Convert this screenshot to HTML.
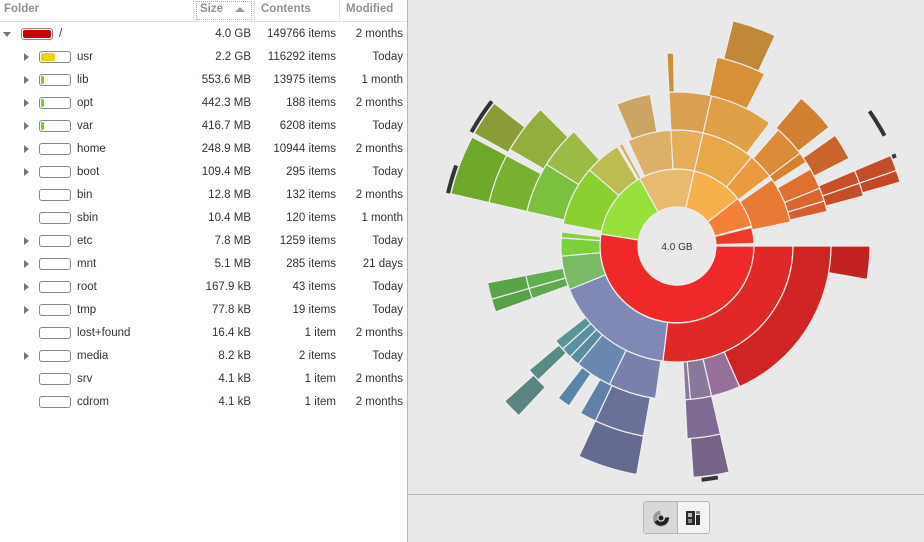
<!DOCTYPE html>
<html><head><meta charset="utf-8"><style>
body{margin:0;width:924px;height:542px;overflow:hidden;font-family:"Liberation Sans","DejaVu Sans",sans-serif;font-size:11.5px;color:#2e3436;background:#fff;position:relative}
#left{position:absolute;left:0;top:0;width:407px;height:542px;background:#fff;border-right:1px solid #b8b8b8}
#hdr{position:absolute;left:0;top:0;width:407px;height:21px;border-bottom:1px solid #e0e0e0;color:#909090;font-weight:bold;font-size:11.5px}
#hdr span{position:absolute;top:3px}
.sep{position:absolute;top:0;width:1px;height:21px;background:#e4e4e4}
.row{position:absolute;left:0;width:407px;height:23px}
.row span{position:absolute;top:5px;white-space:nowrap}
.tri{position:absolute;top:7px;left:24px;width:0;height:0;border-left:5px solid #777;border-top:4px solid transparent;border-bottom:4px solid transparent}
.bar{position:absolute;top:5px;left:39px;width:30px;height:10px;border:1px solid #888;border-radius:3px;background:#fff;overflow:hidden}
.bar i{position:absolute;left:1px;top:1px;bottom:1px;border-radius:2px}
.r{text-align:right}
#right{position:absolute;left:408px;top:0;width:516px;height:542px;background:#e9e9e9}
#bot{position:absolute;left:408px;top:494px;width:516px;height:1px;background:#b8b8b8}
</style></head><body>
<div id="left">
<div id="hdr"><span style="left:4px">Folder</span>
<div class="sep" style="left:193px"></div>
<div style="position:absolute;left:196px;top:1px;width:54px;height:17px;border:1px dotted #aaa"></div>
<span style="left:200px">Size</span>
<div style="position:absolute;left:235px;top:7px;border-left:5px solid transparent;border-right:5px solid transparent;border-bottom:5px solid #999"></div>
<div class="sep" style="left:254px"></div>
<span style="left:261px">Contents</span>
<div class="sep" style="left:339px"></div>
<span style="left:346px">Modified</span>
</div>
<div id="rows"></div>
</div>
<div id="right"></div>
<div id="bot"></div>
<svg id="sun" width="924" height="542" style="position:absolute;left:0;top:0"></svg>
<div style="position:absolute;left:643px;top:501px;width:65px;height:31px;border:1px solid #b5b5b5;border-radius:3px;background:#f4f4f4;overflow:hidden">
<div style="position:absolute;left:0;top:0;width:33px;height:31px;background:#d8d8d8;border-right:1px solid #b5b5b5"></div>
<svg width="66" height="31" style="position:absolute;left:0;top:0">
<path d="M16.5 10.5 A6 6 0 1 0 23 15.5" fill="none" stroke="#999" stroke-width="4"/>
<path d="M12 19 A6 6 0 0 0 23 15.5" fill="none" stroke="#222" stroke-width="4"/>
<circle cx="17" cy="16" r="2.5" fill="#222"/>
<rect x="42" y="9" width="9" height="14" fill="#2a2a2a"/><rect x="44" y="11" width="4" height="4" fill="#bbb"/><rect x="44" y="17" width="4" height="4" fill="#888"/>
<rect x="52" y="9" width="4" height="3" fill="#888"/><rect x="52" y="13" width="4" height="10" fill="#2a2a2a"/>
</svg></div>
<script>
var rows=[["/","4.0 GB","149766 items","2 months",1,"#cc0000",28,1],
["usr","2.2 GB","116292 items","Today",1,"#edd400",14],
["lib","553.6 MB","13975 items","1 month",1,"#73d216",3],
["opt","442.3 MB","188 items","2 months",1,"#73d216",3],
["var","416.7 MB","6208 items","Today",1,"#73d216",3],
["home","248.9 MB","10944 items","2 months",1,"",0],
["boot","109.4 MB","295 items","Today",1,"",0],
["bin","12.8 MB","132 items","2 months",0,"",0],
["sbin","10.4 MB","120 items","1 month",0,"",0],
["etc","7.8 MB","1259 items","Today",1,"",0],
["mnt","5.1 MB","285 items","21 days",1,"",0],
["root","167.9 kB","43 items","Today",1,"",0],
["tmp","77.8 kB","19 items","Today",1,"",0],
["lost+found","16.4 kB","1 item","2 months",0,"",0],
["media","8.2 kB","2 items","Today",1,"",0],
["srv","4.1 kB","1 item","2 months",0,"",0],
["cdrom","4.1 kB","1 item","2 months",0,"",0]];
var h="";rows.forEach(function(r,i){var y=23+i*23;var root=r[7];var bx=root?21:39,nx=root?59:77;
h+='<div class="row" style="top:'+y+'px">';
if(root)h+='<div style="position:absolute;left:3px;top:9px;border-top:5px solid #777;border-left:4px solid transparent;border-right:4px solid transparent"></div>';
else if(r[4])h+='<div class="tri"></div>';
h+='<div class="bar" style="left:'+bx+'px">'+(r[6]?'<i style="width:'+r[6]+'px;background:'+r[5]+'"></i>':'')+'</div>';
h+='<span style="left:'+nx+'px">'+r[0]+'</span><span class="r" style="right:156px">'+r[1]+'</span><span class="r" style="right:71px">'+r[2]+'</span><span class="r" style="right:4px">'+r[3]+'</span></div>';});
document.getElementById("rows").innerHTML=h;
var cx=677,cy=246,R=[39,77,116,154,193,232,271,300];
function pt(r,a){a=a*Math.PI/180;return (cx+r*Math.sin(a)).toFixed(1)+","+(cy-r*Math.cos(a)).toFixed(1)}
function arcR(r0,r1,a0,a1,c,sw){var l=(a1-a0)>180?1:0;return '<path d="M'+pt(r0,a0)+"L"+pt(r1,a0)+"A"+r1+","+r1+" 0 "+l+" 1 "+pt(r1,a1)+"L"+pt(r0,a1)+"A"+r0+","+r0+" 0 "+l+" 0 "+pt(r0,a0)+'Z" fill="'+c+'" stroke="#eee" stroke-width="'+(sw===undefined?1.2:sw)+'"/>'}
var S=[
[1,90,279,"#ef2929"],[1,279,331,"#98e03c"],[1,331,13,"#e8ba70"],[1,13,52,"#f6b04c"],[1,52,75,"#f48038"],[1,76,88,"#ee3a2a"],
[2,90,187,"#e02828"],[2,187,248,"#8089b5"],[2,248,265,"#7aba66"],[2,265,274,"#7cd03a"],[2,274,277,"#8ad040"],[2,281,311,"#8ad030"],[2,311,329,"#bcbc52"],[2,330,332,"#d8b060"],[2,335,357,"#dcb068"],[2,357,13,"#e6ae5a"],[2,13,40,"#e8a848"],[2,40,53,"#ec9a40"],[2,55,78,"#e87a35"],
[3,90,156,"#d02424"],[3,156,167,"#967098"],[3,167,175,"#8a789a"],[3,175,177,"#8a789a"],[3,188,206,"#7a80ac"],[3,206,220,"#6888b0"],[3,220,224,"#5a8ca0"],[3,224,228,"#5a90a0"],[3,228,232,"#5a9494"],[3,250,254,"#60a850"],[3,254,259,"#60b050"],[3,283,302,"#7cc040"],[3,302,318,"#9cbb44"],[3,337,350,"#cca464"],[3,357,13,"#d8a050"],[3,13,37,"#e0a048"],[3,41,53,"#dc8c38"],[3,53,57,"#d88030"],[3,60,68,"#e07030"],[3,68,73,"#dc6430"],[3,73,77,"#d85c30"],
[4,90,100,"#c42222"],[4,167,177,"#7e6a92"],[4,190,205,"#6a7098"],[4,205,210,"#6080a8"],[4,214,218,"#5a84a8"],[4,226,230,"#5a8a84"],[4,250,254,"#5aa048"],[4,254,259,"#5aa448"],[4,283,298,"#78b030"],[4,300,315,"#92ae3c"],[4,357,359,"#c8903c"],[4,12,27,"#d89038"],[4,40,52,"#d08030"],[4,55,63,"#c8642c"],[4,67,71,"#c85028"],[4,71,75,"#c84c28"],
[5,167,176,"#766488"],[5,190,205,"#646a90"],[5,223,228,"#5a8480"],[5,283,298,"#6ea82a"],[5,299,308,"#8a9c38"],[5,14,25,"#c08838"],[5,67,71,"#c44c26"],[5,71,74,"#c44826"]];
var s="";S.forEach(function(q){var a0=q[1],a1=q[2];if(a1<a0)a1+=360;s+=arcR(R[q[0]-1],R[q[0]],a0,a1,q[3])});
[[283,290],[299,308],[55,62],[67,68],[170,174]].forEach(function(a){s+=arcR(233,237,a[0],a[1],"#333",0)});
s+='<circle cx="'+cx+'" cy="'+cy+'" r="38" fill="#e9e9e9"/><text x="'+cx+'" y="'+(cy+4)+'" text-anchor="middle" font-family="Liberation Sans,sans-serif" font-size="10" fill="#333">4.0 GB</text>';
document.getElementById("sun").innerHTML=s;
</script>
</body></html>
